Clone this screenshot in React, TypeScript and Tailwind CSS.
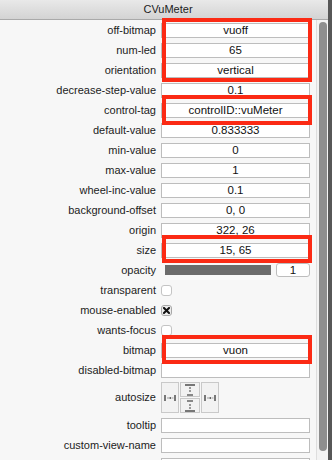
import React from "react";

const font = { fontFamily: '"Liberation Sans", Arial, sans-serif' };

function Field({ value = "" }: { value?: string }) {
  return (
    <div className="h-[15px] w-[149px] border border-[#bdbdbd] bg-white text-center text-[11.5px] leading-[13px] text-[#111]">
      {value}
    </div>
  );
}

function Check({ checked = false }: { checked?: boolean }) {
  return (
    <div
      className={
        "flex h-[11px] w-[11px] items-center justify-center rounded-[3px] border " +
        (checked ? "border-[#a8a8a8] bg-[#ececec]" : "border-[#c4c4c4] bg-white")
      }
    >
      {checked && (
        <svg width="7" height="7" viewBox="0 0 7 7">
          <path d="M1 1L6 6M6 1L1 6" stroke="#111" strokeWidth="2" strokeLinecap="square" />
        </svg>
      )}
    </div>
  );
}

function Row({ label, children, h = "h-[20px]" }: { label: string; children?: React.ReactNode; h?: string }) {
  return (
    <div className={"flex items-center " + h}>
      <div className="w-[156px] text-right text-[11px] text-[#1c1c1c]">{label}</div>
      <div className="ml-[5px] flex w-[149px] items-center">{children}</div>
    </div>
  );
}

function HIcon() {
  return (
    <svg width="14" height="8" viewBox="0 0 14 8">
      <rect x="1" y="1" width="2" height="6" fill="#777" />
      <rect x="11" y="1" width="2" height="6" fill="#777" />
      <rect x="4" y="3.5" width="2" height="1" fill="#999" />
      <rect x="6.5" y="3" width="1.5" height="2" fill="#666" />
      <rect x="8.5" y="3.5" width="2" height="1" fill="#999" />
    </svg>
  );
}

function VTop() {
  return (
    <svg width="12" height="12" viewBox="0 0 12 12">
      <rect x="1" y="0" width="10" height="2" fill="#777" />
      <rect x="5" y="3" width="2" height="2" fill="#999" />
      <rect x="5" y="6" width="2" height="2" fill="#999" />
      <rect x="3" y="10" width="6" height="2" fill="#888" />
    </svg>
  );
}

function VBottom() {
  return (
    <svg width="12" height="12" viewBox="0 0 12 12">
      <rect x="3" y="0" width="6" height="2" fill="#888" />
      <rect x="5" y="4" width="2" height="2" fill="#999" />
      <rect x="5" y="7" width="2" height="2" fill="#999" />
      <rect x="1" y="10" width="10" height="2" fill="#777" />
    </svg>
  );
}

export default function App() {
  return (
    <div className="relative flex h-[460px] w-[332px] overflow-hidden bg-[#f7f7f7]" style={font}>
      <div className="flex w-[328px] flex-col">
        <div className="flex h-[20px] shrink-0 items-center justify-center border-b border-[#a9a9a9] bg-gradient-to-b from-[#e9e9e9] to-[#d3d3d3] text-[11px] text-[#1c1c1c]">
          <span className="ml-[8px]">CVuMeter</span>
        </div>
        <div className="flex flex-1">
          <div className="w-[316px] bg-[#f7f7f7]">
            <Row label="off-bitmap"><Field value="vuoff" /></Row>
            <Row label="num-led"><Field value="65" /></Row>
            <Row label="orientation"><Field value="vertical" /></Row>
            <Row label="decrease-step-value"><Field value="0.1" /></Row>
            <Row label="control-tag"><Field value="controlID::vuMeter" /></Row>
            <Row label="default-value"><Field value="0.833333" /></Row>
            <Row label="min-value"><Field value="0" /></Row>
            <Row label="max-value"><Field value="1" /></Row>
            <Row label="wheel-inc-value"><Field value="0.1" /></Row>
            <Row label="background-offset"><Field value="0, 0" /></Row>
            <Row label="origin"><Field value="322, 26" /></Row>
            <Row label="size"><Field value="15, 65" /></Row>
            <Row label="opacity">
              <div className="ml-[4px] h-[10px] w-[106px] bg-[#6b6b6b]" />
              <div className="ml-[5px] h-[14px] w-[34px] rounded-[3px] border border-[#bdbdbd] bg-white text-center text-[11.5px] leading-[12px] text-[#111]">
                1
              </div>
            </Row>
            <Row label="transparent"><Check /></Row>
            <Row label="mouse-enabled"><Check checked /></Row>
            <Row label="wants-focus"><Check /></Row>
            <Row label="bitmap"><Field value="vuon" /></Row>
            <Row label="disabled-bitmap"><Field /></Row>
            <Row label="autosize" h="h-[35px]">
              <div className="flex gap-[1px]">
                <div className="flex h-[31px] w-[18px] items-center justify-center border border-[#c9c9c9] bg-[#f2f2f2]">
                  <HIcon />
                </div>
                <div className="flex flex-col gap-[1px]">
                  <div className="flex h-[15px] w-[20px] items-center justify-center border border-[#c9c9c9] bg-[#f2f2f2]">
                    <VTop />
                  </div>
                  <div className="flex h-[15px] w-[20px] items-center justify-center border border-[#c9c9c9] bg-[#f2f2f2]">
                    <VBottom />
                  </div>
                </div>
                <div className="flex h-[31px] w-[18px] items-center justify-center border border-[#c9c9c9] bg-[#f2f2f2]">
                  <HIcon />
                </div>
              </div>
            </Row>
            <Row label="tooltip"><Field /></Row>
            <Row label="custom-view-name"><Field /></Row>
            <Row label=""><Field /></Row>
          </div>
          <div className="flex w-[12px] justify-center border-l border-[#dedede] bg-[#f3f3f3] pt-[2px]">
            <div className="h-[429px] w-[8px] rounded-full bg-[#8e8e8e]" />
          </div>
        </div>
      </div>
      <div className="w-[4px] bg-[#575757]" />

      <div className="pointer-events-none absolute left-[162px] top-[18px] h-[64px] w-[150px] border-[4px] border-[#fb2a14]" />
      <div className="pointer-events-none absolute left-[162px] top-[95px] h-[30px] w-[150px] border-[4px] border-[#fb2a14]" />
      <div className="pointer-events-none absolute left-[162px] top-[235px] h-[28px] w-[150px] border-[4px] border-[#fb2a14]" />
      <div className="pointer-events-none absolute left-[162px] top-[335px] h-[29px] w-[150px] border-[4px] border-[#fb2a14]" />
    </div>
  );
}
